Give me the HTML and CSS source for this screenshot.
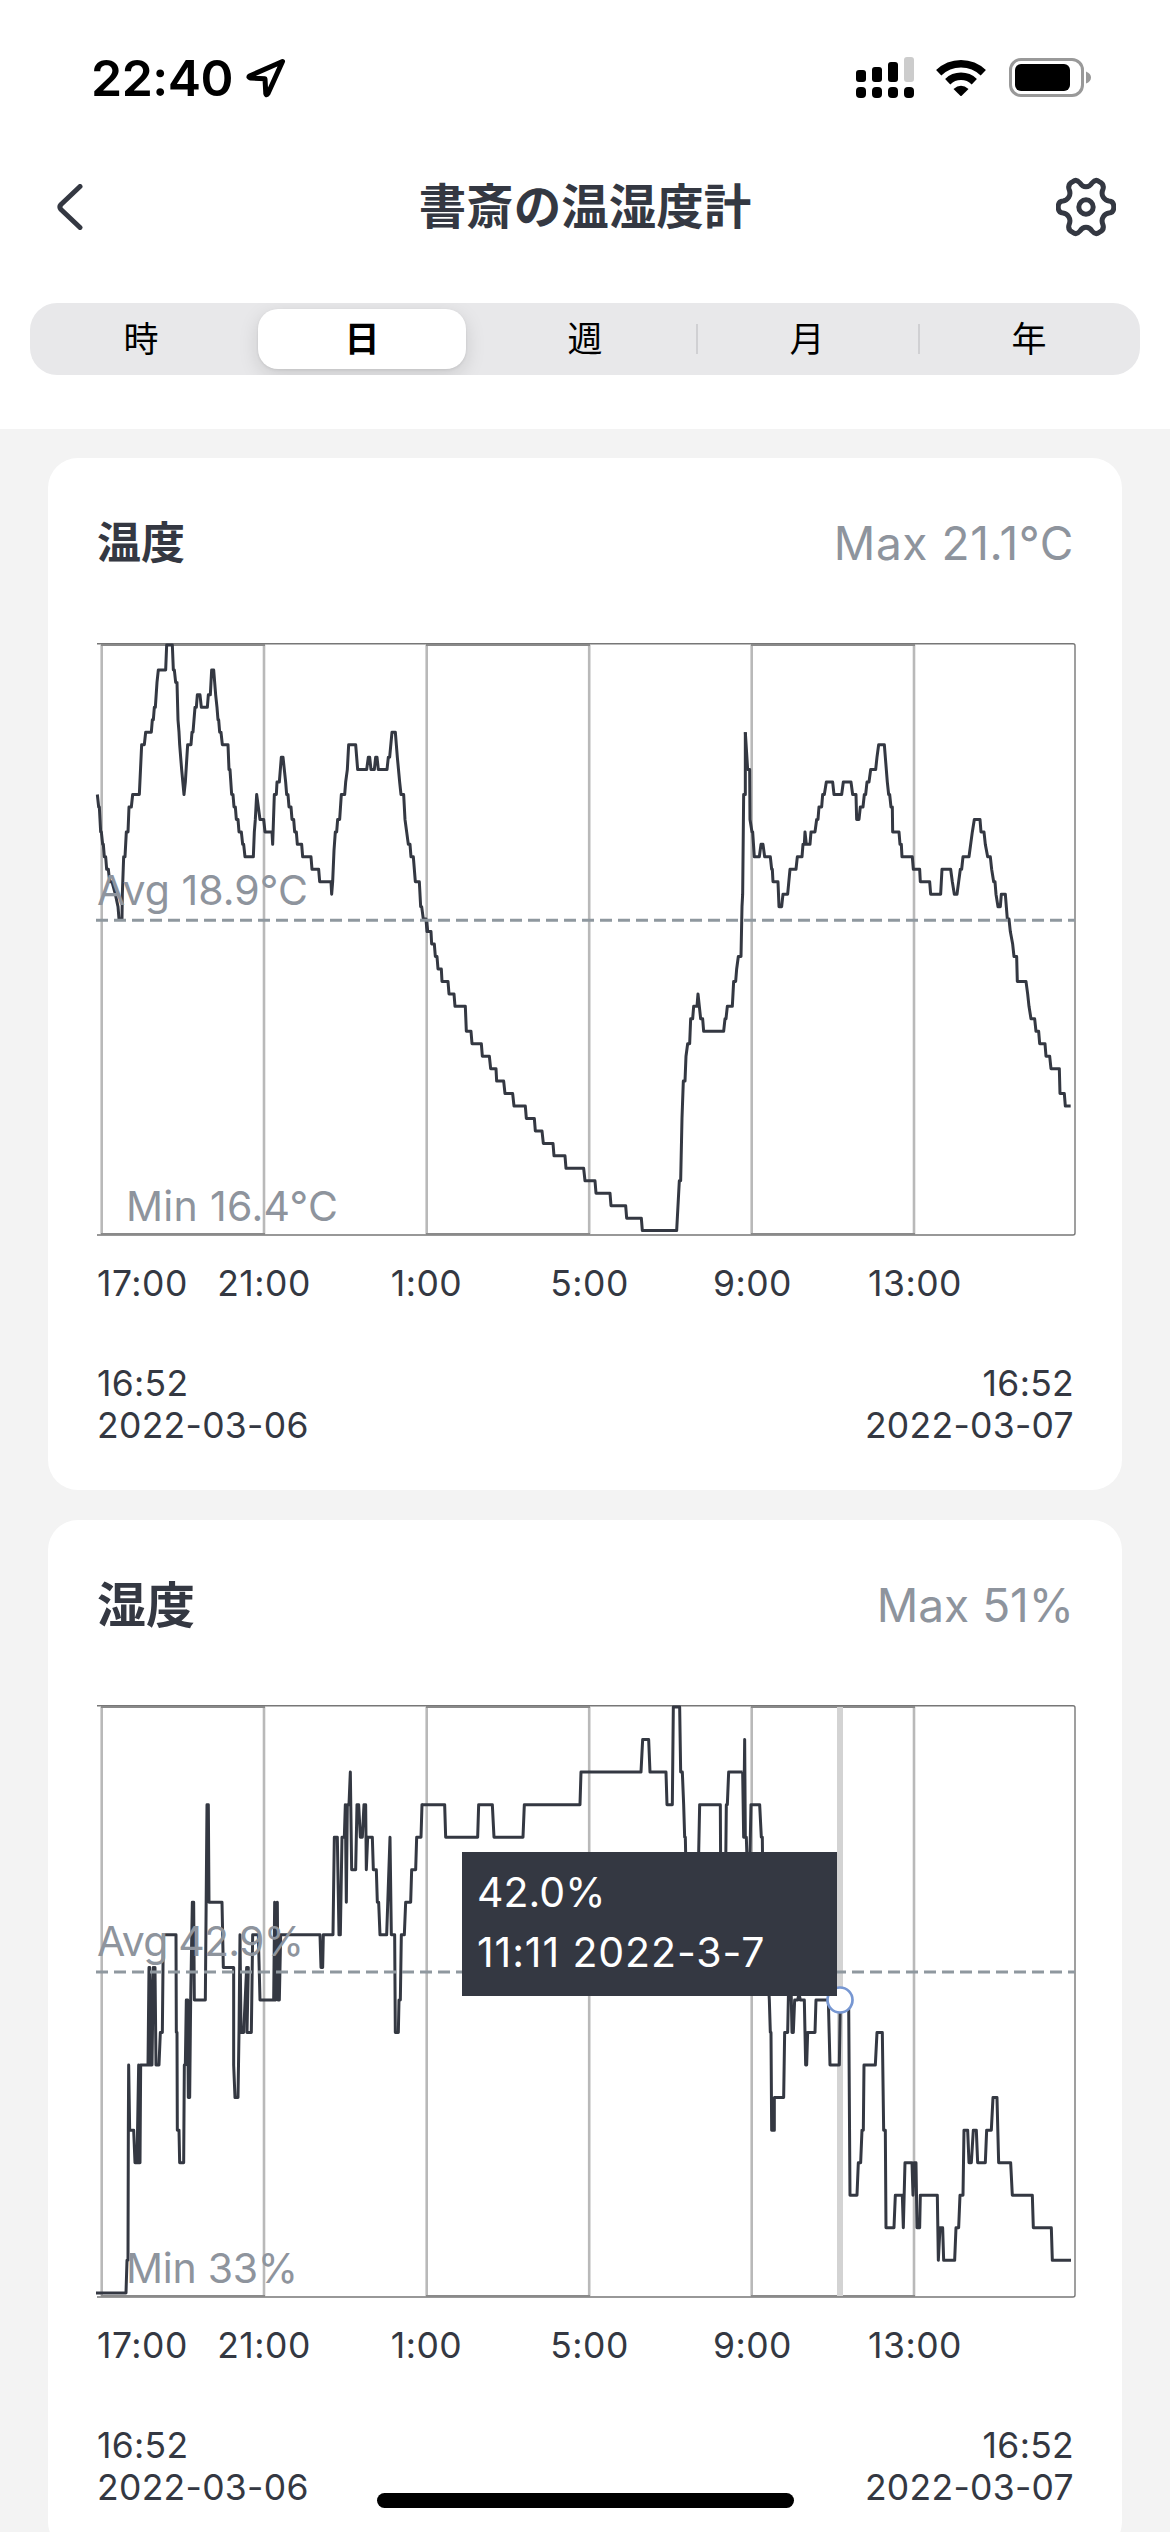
FILE: index.html
```html
<!DOCTYPE html>
<html lang="ja">
<head>
<meta charset="utf-8">
<title>書斎の温湿度計</title>
<link rel="stylesheet" href="styles.css">
</head>
<body>
<div class="screen">
  <header class="top">
    <div class="status">
      <span class="clock">22:40</span>
      <svg class="locate" width="40" height="40" viewBox="0 0 40 40"><path d="M36.500 3.500 L3.500 18 Q2 19.500 4.500 20 L19 20.800 L19.800 35.500 Q20.500 38 22 35.500 Z"/></svg>
      <svg class="signal" width="58" height="42" viewBox="0 0 58 42">
        <g><rect x="0" y="13" width="10" height="12" rx="3"/><rect x="16" y="10" width="10" height="15" rx="3"/><rect x="32" y="5" width="10" height="20" rx="3"/><rect class="off" x="48" y="0" width="10" height="25" rx="3"/>
        <rect x="0" y="30" width="10" height="11" rx="4"/><rect x="16" y="30" width="10" height="11" rx="4"/><rect x="32" y="30" width="10" height="11" rx="4"/><rect x="48" y="30" width="10" height="11" rx="4"/></g>
      </svg>
      <svg class="wifi" width="50" height="38" viewBox="0 0 50 38">
        <path class="arc" d="M2.700 13.700 A32 32 0 0 1 47.300 13.700 M11.700 22.700 A19.200 19.200 0 0 1 38.300 22.700"/>
        <path d="M17.500 30 Q25 23.500 32.500 30 L25.700 36.700 Q25 37.300 24.300 36.700 Z"/>
      </svg>
      <svg class="battery" width="82" height="40" viewBox="0 0 82 40">
        <rect class="shell" x="1.500" y="1.500" width="72" height="36" rx="10.500"/><rect x="6" y="6" width="55" height="27" rx="6"/><path class="cap" d="M77 13.500 Q82 15.500 82 19.500 Q82 23.500 77 25.500 Z"/>
      </svg>
    </div>
    <nav class="bar">
      <svg class="back" width="26" height="46" viewBox="0 0 26 46"><path d="M23 2.500 L4 20.500 Q1.800 23 4 25.500 L23 43.500"/></svg>
      <h1>書斎の温湿度計</h1>
      <svg class="gear" width="60" height="60" viewBox="-30 -30 60 60">
        <path d="M-6 -24 Q-9.500 -28.200 -13 -25.500 Q-18.500 -23 -17 -18 C-14 -11 -19 -6.500 -23 -6 Q-27.800 -5.700 -27.800 0 Q-27.800 5.700 -23 6 C-19 6.500 -14 11 -17 18 Q-18.500 23 -13 25.500 Q-9.500 28.200 -6 24 C-3 19 3 19 6 24 Q9.500 28.200 13 25.500 Q18.500 23 17 18 C14 11 19 6.500 23 6 Q27.800 5.700 27.800 0 Q27.800 -5.700 23 -6 C19 -6.500 14 -11 17 -18 Q18.500 -23 13 -25.500 Q9.500 -28.200 6 -24 C3 -19 -3 -19 -6 -24 Z"/>
        <circle r="7.200"/>
      </svg>
    </nav>
    <div class="segments">
      <span>時</span><span class="on">日</span><span>週</span><span class="ruled">月</span><span class="ruled">年</span>
    </div>
  </header>

  <main>
    <section class="card">
      <div class="head"><h2>温度</h2><span class="max loose">Max 21.1°C</span></div>
      <div class="plot">
        <svg width="979" height="593" viewBox="0 0 979 593">
          <path class="frame" d="M0 .7 H976 Q978 .7 978 2.700 V590 Q978 592 976 592 H0"/>
          <path class="grid" d="M4.700 1V591 M167 1V591 M329.700 1V591 M492.200 1V591 M654.700 1V591 M817 1V591"/>
          <path class="band" d="M4 2H168 M329 2H493 M654 2H818 M4 591H168 M329 591H493 M654 591H818"/>
          <g class="line" transform="translate(0 2) scale(.33333 12.46)">
            <polyline transform="translate(-51 0)" points="52,12 56,13 58,13 62,15 64,15 68,16 70,16 73,17 77,17 80,18 85,18 89,19 96,19 106,20 114,21 117,22 126,22 127,20 131,17 135,17 139,15 144,15 147,13 154,13 158,12 178,12 185,8 193,8 197,7 214,7 217,6 220,6 223,5 226,5 231,3 235,2 257,2 260,0 277,0 280,2 283,2 287,3 291,3 294,6 297,7 299,8 305,10 312,12 316,11 323,8 333,8 336,7 339,7 345,5 349,5 352,4 360,4 364,5 382,5 385,4 391,4 395,2 401,2 407,4 411,5 414,6 416,6 419,7 423,7 427,8 444,8 447,10 450,10 455,12 459,12 462,13 466,13 469,14 474,14 477,15 484,15 488,16 491,16 495,17 520,17 523,15 526,14 530,12 535,13 540,14 551,14 555,15 576,15 578,16 583,12 589,12 591,11 598,11 604,9 609,9 617,11 620,12 624,12 627,13 633,13 636,14 641,14 644,15 649,15 652,16 665,16 668,17 693,17 696,18 716,18 719,19 753,19 755,20 758,19 762,16.5 766,15 770,15 773,14 779,14 784,12 794,12 797,11 802,10 806,8 827,8 833,10 860,10 865,9 869,9 873,10 883,10 887,9 891,9 895,10 921,10 925,9 929,9 936,7 946,7 952,9 959,11 963,12 971,12 975,14 980,15 985,16 990,16 993,17 1000,17 1006,19 1018,19 1022,21 1025,21 1030,22 1038,22 1041,23 1043,23"/>
            <polyline transform="translate(969 0)" points="20,22 23,23 33,23 35,24 43,24 46,25 51,25 54,26 64,26 66,27 84,27 87,28 102,28 105,29 136,29 139,31 153,31 156,32 184,32 187,33 208,33 212,34 228,34 230,35 251,35 255,36 278,36 282,37 316,37 319,38 343,38 346,39 366,39 370,40 399,40 402,41 435,41 438,42 491,42 495,43 525,43 528,44 570,44 573,45 617,45 620,46 664,46 667,47 770,47 778,43 782,43 786,38 790,35 795,35 798,33 803,32 809,32 812,30 818,30 821,29 831,29 834,28 838,29 842,30 848,30 851,31 911,31 915,30 918,30 922,29 937,29 941,27 947,27 950,26 955,25 963,25 966,21 968,20 971,12 976,12 976,7"/>
            <polyline transform="translate(1899 0)" points="46,7 53,10 59,10 60,14 66,15 68,15 73,17 88,17 93,16 99,16 104,17 121,17 125,18 127,18 129,19 144,19 147,21 155,21 159,20 173,20 180,18 198,18 202,17 216,17 219,16 223,16 225,15 229,16 240,16 243,15 255,15 260,14 264,14 267,13 275,13 278,12 283,12 289,11 308,11 312,12 335,12 340,11 363,11 368,12 378,12 380,14 387,14 391,13 399,13 403,12 407,12 411,11 417,11 422,10 437,10 441,9 446,8 463,8 472,11 476,12 479,12 483,13 487,13 488,15 507,15 510,16 514,16 516,17 547,17 550,18 569,18 571,19 599,19 602,20 632,20 636,18 662,18 667,19 673,20 681,20 686,19 691,18 695,18 699,17 717,17 722,16 727,15 733,14 750,14 753,15 762,15 766,16 773,17 781,17 785,18 791,19 795,19 798,20 804,21 811,21 814,20 826,20 832,22 837,22 841,23 848,24 852,25 860,25 862,27 888,27 893,28 897,29 903,30 914,30 918,31 926,31 929,32 945,32 948,33 959,33 963,34 988,34 990,36 1003,36 1006,37 1022,37"/>
          </g>
          <path class="average" d="M-1 277.300 H978"/>
          <text class="note" x="0" y="261.500" textLength="211">Avg 18.9°C</text>
          <text class="note" x="29" y="577.500" textLength="212">Min 16.4°C</text>
        </svg>
      </div>
      <div class="ticks"><span>17:00</span><span>21:00</span><span>1:00</span><span>5:00</span><span>9:00</span><span>13:00</span></div>
      <div class="range"><p>16:52<br>2022-03-06</p><p>16:52<br>2022-03-07</p></div>
    </section>

    <section class="card">
      <div class="head"><h2 class="wide">湿度</h2><span class="max">Max 51%</span></div>
      <div class="plot">
        <svg width="979" height="593" viewBox="0 0 979 593">
          <path class="frame" d="M0 .7 H976 Q978 .7 978 2.700 V590 Q978 592 976 592 H0"/>
          <path class="grid" d="M4.700 1V591 M167 1V591 M329.700 1V591 M492.200 1V591 M654.700 1V591 M817 1V591"/>
          <path class="band" d="M4 2H168 M329 2H493 M654 2H818 M4 591H168 M329 591H493 M654 591H818"/>
          <path class="cursor" d="M743 2V591"/>
          <g class="line" transform="translate(0 2) scale(.33333 32.55)">
            <polyline transform="translate(-51 0)" points="48,18 138,18 141,17 144,17 145,13 146,11 149,13 161,13 165,14 171,14 176,11 176,14 180,14 182,11 204,11 207,8 209,8 212,11 216,11 220,8 208,11 213,9 225,8 228,11 237,11 241,10 247,10 250,7 288,7 289,10 291,10 292,13 297,13 299,14 311,14 313,11 316,11 319,9 323,9 325,12 329,12 332,9 337,6 341,6 343,9 376,9 381,3 385,3 387,6 426,6 430,8 461,8 461,11 465,12 474,12 477,10 480,7 483,10 491,10 500,8 505,8 501,10 514,10 518,7 535,7 540,9 581,9 584,6 587,9 592,6 594,9 598,9 602,7 720,7 723,8 728,8 730,7 759,7 763,4 772,4 777,7 781,7 786,4 793,4 796,3 799,6 802,3 807,3 811,2 815,5 827,5 831,3 836,3 841,4 847,4 852,3 857,3 859,5 863,4 877,4 880,5 889,5 892,6 896,6 900,7 920,7 930,4 934,7 944,7 946,10 955,10 957,9 961,9 964,7 973,7 977,6 992,6 995,5 1007,5 1010,4 1023,4 1026,3 1028,3"/>
            <polyline transform="translate(909 0)" points="66,3 134,3 137,4 233,4 236,3 277,3 282,4 369,4 373,3 540,3 543,2 723,2 728,1 746,1 750,2 798,2 801,3 817,3 820,0 839,0 842,2 847,2 851,3 854,4 856,4 858,5 895,5 899,3 961,3 962,5 977,5 979,3 982,3 986,2 1028,2"/>
            <polyline transform="translate(1869 0)" points="68,2 71,4 74,1 76,4 79,4 82,5 89,5 93,3 119,3 124,4 127,4 128,5 148,9 151,10 153,10 155,13 163,13 163,12 191,12 194,10 203,10 206,8.5 213,8.5 216,10 220,10 224,9 233,9 237,8.800 241,9 253,9 257,11 260,11 263,10 285,10 288,9 325,9 330,11 358,11 361,9 386,9 390,15 411,15 415,14 422,14 426,13 430,13 432,11 466,11 471,10 487,10 491,13 496,13 498,16 522,16 526,15 547,15 550,16 555,14 576,14 579,15 583,14 588,14 591,16 599,16 601,15 652,15 655,17 660,16 668,16 671,17 704,17 708,16 716,16 720,15 729,15 732,13 743,13 747,14 754,14 760,13 769,13 773,14 796,14 800,13 814,13 819,12 831,12 836,14 872,14 877,15 937,15 940,16 994,16 997,17 1053,17"/>
          </g>
          <path class="average" d="M-1 267 H978"/>
          <text class="note" x="0" y="250.500" textLength="207">Avg 42.9%</text>
          <text class="note" x="29" y="577.500" textLength="172">Min 33%</text>
          <circle class="marker" cx="743" cy="295" r="12.500"/>
        </svg>
        <div class="tooltip"><span>42.0%</span><span class="when">11:11 2022-3-7</span></div>
      </div>
      <div class="ticks"><span>17:00</span><span>21:00</span><span>1:00</span><span>5:00</span><span>9:00</span><span>13:00</span></div>
      <div class="range"><p>16:52<br>2022-03-06</p><p>16:52<br>2022-03-07</p></div>
    </section>
  </main>
  <div class="home"></div>
</div>
</body>
</html>
```
FILE: styles.css
```css
* { box-sizing: border-box; margin: 0; padding: 0; }

body {
  font-family: Inter, "Noto Sans CJK JP", sans-serif;
  color: #343842;
  background: #f3f3f3;
}

.screen {
  position: relative;
  width: 1170px;
  height: 2532px;
  overflow: hidden;
}

.top { height: 429px; background: #fff; }

.status {
  display: flex;
  align-items: center;
  height: 156px;
  padding-left: 91px;
  color: #000;
}
.clock { font-size: 50px; font-weight: 600; line-height: 60px; width: 140px; letter-spacing: -0.5px; }
.locate { margin-left: 15px; fill: none; stroke: #000; stroke-width: 5; stroke-linejoin: round; }
.signal { margin-left: 570px; }
.signal .off { fill: #ccc; }
.wifi { margin-left: 22px; }
.wifi .arc { fill: none; stroke: #000; stroke-width: 7.500; }
.battery { margin-left: 23px; }
.battery .shell { fill: none; stroke: #999; stroke-width: 3; }
.battery .cap { fill: #999; }

.bar {
  display: grid;
  grid-template-columns: 60px 1fr 60px;
  align-items: center;
  height: 102px;
  padding: 0 54px;
}
.bar svg { fill: none; stroke: #343842; stroke-linecap: round; stroke-linejoin: round; }
.back { margin-left: 3px; stroke-width: 5; }
.gear { stroke-width: 5; }
h1 { font-size: 47.500px; line-height: 60px; font-weight: 700; text-align: center; }

.segments {
  display: grid;
  grid-template-columns: repeat(5, 1fr);
  height: 72px;
  margin: 45px 30px 0;
  padding: 6px 0;
  border-radius: 27px;
  background: #e8e8ea;
  color: #000;
  overflow: hidden;
}
.segments span {
  display: flex;
  align-items: center;
  justify-content: center;
  padding-bottom: 1px;
  font-size: 35px;
  line-height: 50px;
}
.segments .on {
  margin: 0 8px 0 6px;
  border-radius: 20px;
  background: #fff;
  font-weight: 700;
  box-shadow: 0 6px 20px rgba(0, 0, 0, .13), 0 1px 3px rgba(0, 0, 0, .08);
}
.segments .ruled {
  background: linear-gradient(#d0d0d3, #d0d0d3) left center / 2px 30px no-repeat;
}

main { display: flex; flex-direction: column; gap: 30px; padding: 29px 48px 0; }

.card {
  height: 1032px;
  flex: none;
  padding: 0 48px 0 49px;
  border-radius: 30px;
  background: #fff;
}
.head {
  display: flex;
  align-items: center;
  justify-content: space-between;
  height: 170px;
}
h2 { font-size: 44px; line-height: 60px; font-weight: 700; }
h2.wide { font-size: 49px; padding-top: 2px; }
.max { font-size: 46px; color: #8e949d; }
.max.loose { letter-spacing: 0.6px; }

.plot { position: relative; height: 593px; margin-top: 15px; }
.plot svg { display: block; overflow: visible; }
.frame { fill: none; stroke: #777; stroke-width: 1.400; }
.grid { stroke: #b9b9b9; stroke-width: 2.600; }
.band { stroke: #8a8a8a; stroke-width: 2; }
.line polyline {
  fill: none;
  stroke: #343842;
  stroke-width: 3;
  stroke-linejoin: round;
  vector-effect: non-scaling-stroke;
}
.average { stroke: #8f989f; stroke-width: 3; stroke-dasharray: 12 6; }
.note { font-size: 41px; fill: #8e949d; }
.cursor { stroke: #d3d3d3; stroke-width: 6; }
.marker { fill: #fff; stroke: #7797d2; stroke-width: 2.700; }

.tooltip {
  position: absolute;
  left: 365px;
  top: 147px;
  width: 375px;
  height: 144px;
  padding: 10px 15px;
  display: flex;
  flex-direction: column;
  background: #343842;
  color: #fff;
  font-size: 41px;
  line-height: 60px;
}
.tooltip .when { letter-spacing: 0.9px; }

.ticks {
  display: grid;
  grid-template-columns: 90px 154px 171px 155px 171px 154px;
  margin-top: 25px;
  font-size: 35.500px;
  line-height: 46px;
  letter-spacing: 0.5px;
}
.ticks span { text-align: center; white-space: nowrap; }
.range {
  display: flex;
  justify-content: space-between;
  margin-top: 56px;
  font-size: 35.500px;
  line-height: 42px;
  letter-spacing: 0.3px;
}
.range p:last-child { text-align: right; }

.home {
  position: absolute;
  left: 377px;
  bottom: 24px;
  width: 417px;
  height: 15px;
  border-radius: 8px;
  background: #000;
}
```
